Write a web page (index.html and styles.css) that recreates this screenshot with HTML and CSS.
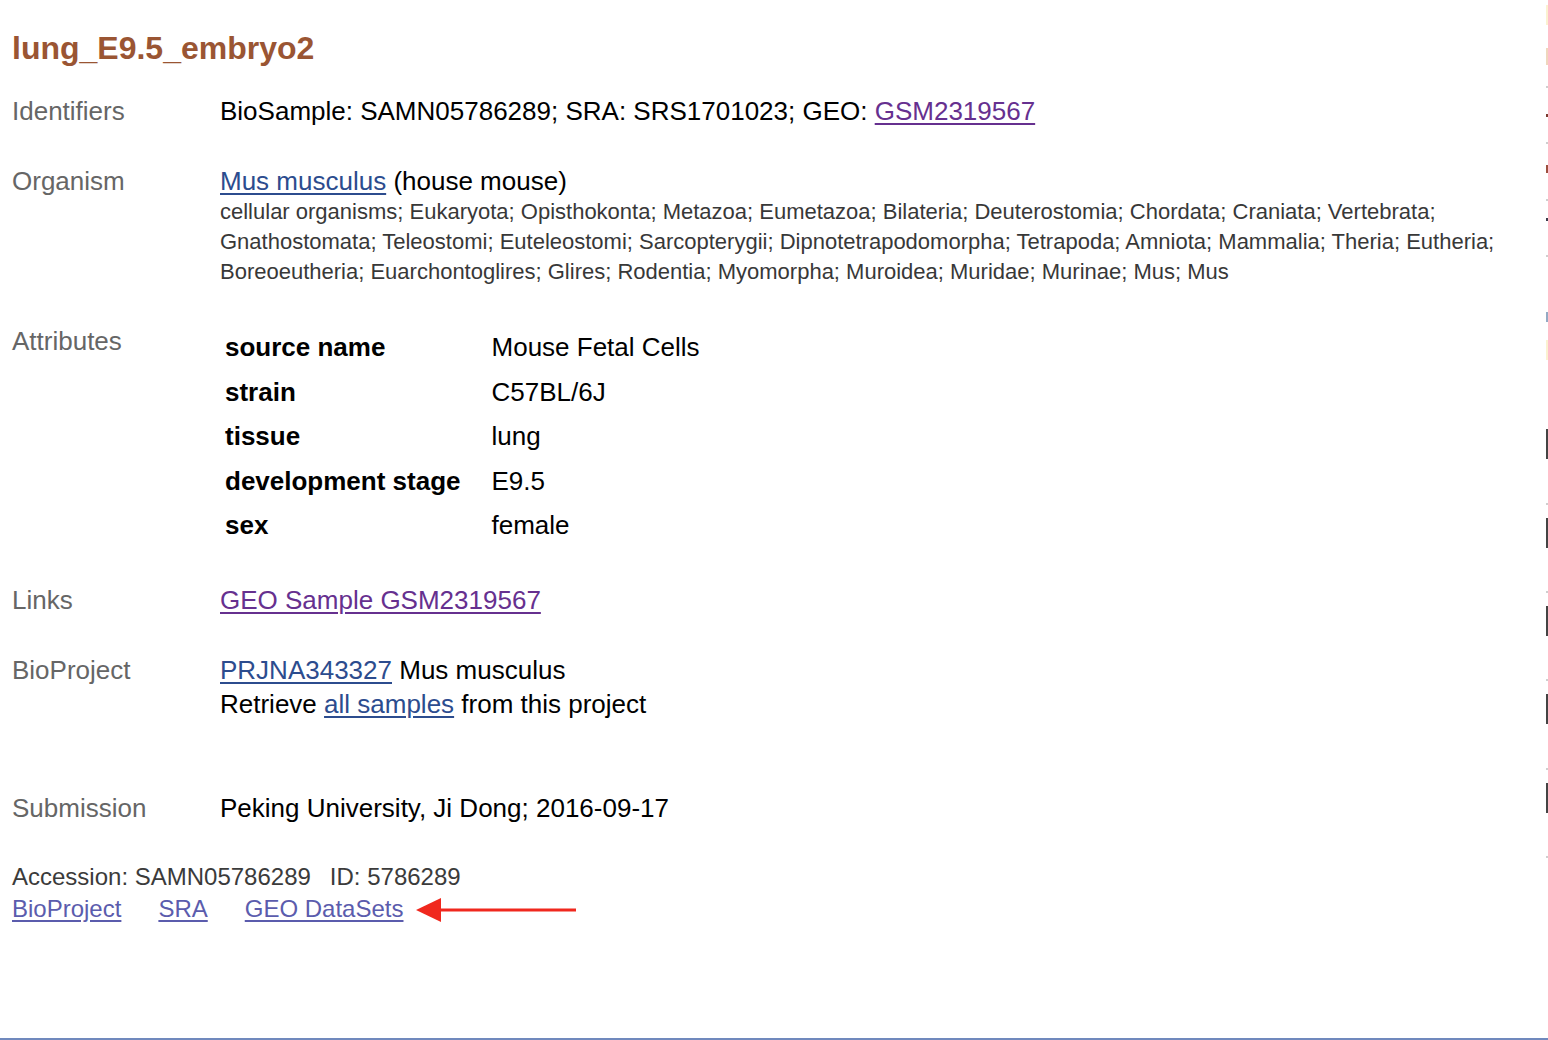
FILE: index.html
```html
<!DOCTYPE html>
<html>
<head>
<meta charset="utf-8">
<link rel="stylesheet" href="styles.css">
</head>
<body>
<div class="page">
  <main class="main">
    <h1 class="title">lung_E9.5_embryo2</h1>
    <div class="row">
      <div class="label">Identifiers</div>
      <div class="value">BioSample: SAMN05786289; SRA: SRS1701023; GEO: <a class="visited" href="#">GSM2319567</a></div>
    </div>
    <div class="row row-organism">
      <div class="label">Organism</div>
      <div class="value">
        <div><a class="link" href="#">Mus musculus</a> (house mouse)</div>
        <div class="lineage">cellular organisms; Eukaryota; Opisthokonta; Metazoa; Eumetazoa; Bilateria; Deuterostomia; Chordata; Craniata; Vertebrata; Gnathostomata; Teleostomi; Euteleostomi; Sarcopterygii; Dipnotetrapodomorpha; Tetrapoda; Amniota; Mammalia; Theria; Eutheria; Boreoeutheria; Euarchontoglires; Glires; Rodentia; Myomorpha; Muroidea; Muridae; Murinae; Mus; Mus</div>
      </div>
    </div>
    <div class="row row-attrs">
      <div class="label">Attributes</div>
      <div class="value">
        <table class="attrs">
          <tr><th>source name</th><td>Mouse Fetal Cells</td></tr>
          <tr><th>strain</th><td>C57BL/6J</td></tr>
          <tr><th>tissue</th><td>lung</td></tr>
          <tr><th>development stage</th><td>E9.5</td></tr>
          <tr><th>sex</th><td>female</td></tr>
        </table>
      </div>
    </div>
    <div class="row">
      <div class="label">Links</div>
      <div class="value"><a class="visited" href="#">GEO Sample GSM2319567</a></div>
    </div>
    <div class="row">
      <div class="label">BioProject</div>
      <div class="value">
        <div><a class="link" href="#">PRJNA343327</a> Mus musculus</div>
        <div class="retrieve">Retrieve <a class="link" href="#">all samples</a> from this project</div>
      </div>
    </div>
    <div class="row row-submission">
      <div class="label">Submission</div>
      <div class="value">Peking University, Ji Dong; 2016-09-17</div>
    </div>
    <div class="footer">
      <div class="accession">Accession: SAMN05786289<span class="gap"></span>ID: 5786289</div>
      <div class="footer-links">
        <a class="flink" href="#">BioProject</a>
        <a class="flink" href="#">SRA</a>
        <a class="flink" href="#">GEO DataSets</a>
        <svg class="arrow" width="162" height="26" viewBox="0 0 162 26">
          <line x1="20" y1="13" x2="160" y2="13" stroke="#f0281e" stroke-width="3"/>
          <polygon points="0,13 25,1 25,25" fill="#f0281e"/>
        </svg>
      </div>
    </div>
  </main>
  <aside class="edge">
    <span class="m m-yellow h20 t5"></span>
    <span class="m m-tan t23"></span>
    <span class="m m-gray t21"></span>
    <span class="m m-brown t26"></span>
    <span class="m m-gray t25"></span>
    <span class="m m-brown2 t21"></span>
    <span class="m m-gray t26"></span>
    <span class="m m-dark t17"></span>
    <span class="m m-gray t34"></span>
    <span class="m m-blue t55"></span>
    <span class="m m-yellow h20 t18"></span>
    <span class="m m-bar t69"></span>
    <span class="m m-gray t44"></span>
    <span class="m m-bar t13"></span>
    <span class="m m-gray t43"></span>
    <span class="m m-bar t13"></span>
    <span class="m m-gray t43"></span>
    <span class="m m-bar t13"></span>
    <span class="m m-gray t44"></span>
    <span class="m m-bar t13"></span>
    <span class="m m-gray t43"></span>
  </aside>
</div>
</body>
</html>
```
FILE: styles.css
```css
html, body {
  margin: 0;
  padding: 0;
  background: #fff;
}
body {
  font-family: "Liberation Sans", Arial, Helvetica, sans-serif;
  color: #000;
}
.page {
  display: flex;
  height: 1040px;
  box-sizing: border-box;
  border-bottom: 2px solid #7089bd;
  overflow: hidden;
}
.main {
  flex: 1;
  padding: 28px 0 0 12px;
}
.title {
  margin: 0 0 28px 0;
  font-size: 32px;
  line-height: 40px;
  font-weight: bold;
  color: #9a5533;
}
.row {
  display: grid;
  grid-template-columns: 208px 1fr;
  font-size: 26px;
  line-height: 30px;
  margin-bottom: 40px;
}
.row-organism {
  margin-bottom: 39px;
}
.row-attrs {
  margin-bottom: 43px;
}
.label {
  color: #666;
}
.value {
  color: #000;
}
.lineage {
  font-size: 22px;
  line-height: 30px;
  margin-top: 1px;
  color: #383838;
  padding-right: 30px;
}
.attrs {
  border-collapse: collapse;
  margin-top: -1px;
  margin-bottom: -6px;
}
.attrs th, .attrs td {
  padding: 7px 5px 7.5px 5px;
  line-height: 30px;
  text-align: left;
  vertical-align: top;
  font-size: 26px;
}
.attrs th {
  font-weight: bold;
  padding-right: 26px;
}
.retrieve {
  margin-top: 4px;
}
.row-submission {
  margin-top: 74px;
  margin-bottom: 38px;
}
a {
  text-decoration: underline;
  text-underline-offset: 3px;
}
.link {
  color: #2c4c8e;
}
.visited {
  color: #66308f;
}
.footer {
  font-size: 24px;
  line-height: 32px;
  color: #3b3b3b;
}
.gap {
  display: inline-block;
  width: 19px;
}
.footer-links {
  display: flex;
  align-items: center;
  gap: 37px;
}
.flink {
  color: #5b5cad;
}
.arrow {
  display: block;
  margin-left: -24px;
  margin-top: 2px;
}
.edge {
  width: 2px;
  display: flex;
  flex-direction: column;
}
.m {
  display: block;
  width: 2px;
  height: 2px;
  flex: none;
}
.h20 { height: 20px; }
.t5 { margin-top: 5px; }
.t13 { margin-top: 13px; }
.t17 { margin-top: 17px; }
.t18 { margin-top: 18px; }
.t21 { margin-top: 21px; }
.t23 { margin-top: 23px; }
.t25 { margin-top: 25px; }
.t26 { margin-top: 26px; }
.t34 { margin-top: 34px; }
.t43 { margin-top: 43px; }
.t44 { margin-top: 44px; }
.t55 { margin-top: 55px; }
.t69 { margin-top: 69px; }
.m-yellow { background: #fbf1d0; }
.m-tan { background: #efd7bd; height: 17px; }
.m-gray { background: #cfcfcf; }
.m-brown { background: #7a3a2e; height: 3px; }
.m-brown2 { background: #9c4f3e; height: 8px; }
.m-dark { background: #3a3a4a; height: 3px; }
.m-blue { background: #94aac4; height: 10px; }
.m-bar { background: #444; height: 30px; }
```
